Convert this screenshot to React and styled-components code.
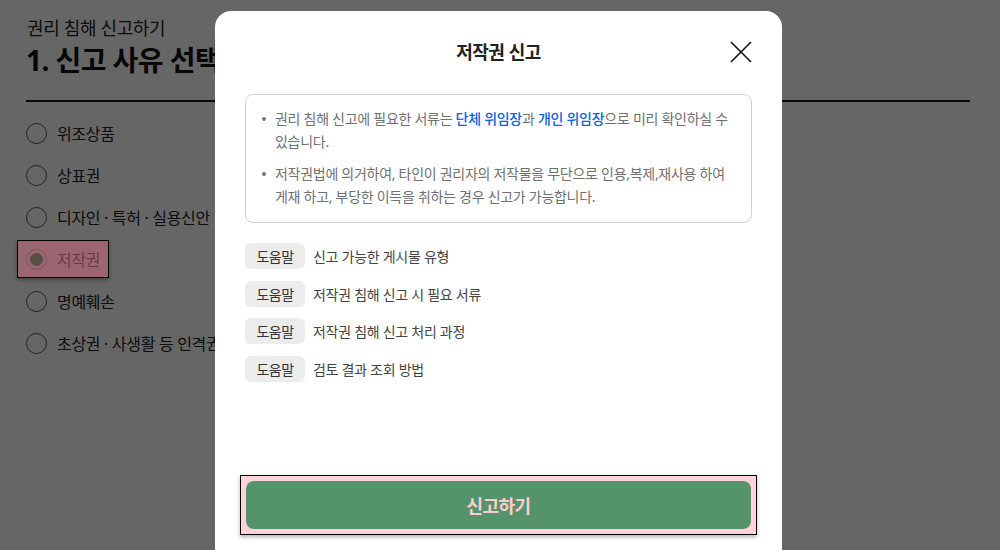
import React from 'react';
import styled, { createGlobalStyle } from 'styled-components';

const GlobalStyle = createGlobalStyle`
  * { box-sizing: border-box; }
  html, body { margin: 0; padding: 0; background: #ffffff; }
  body {
    font-family: "Noto Sans", "Noto Sans CJK KR", sans-serif;
    letter-spacing: -0.03em;
    color: #222;
  }
`;

const reasons = ['위조상품', '상표권', '디자인 · 특허 · 실용신안', '저작권', '명예훼손', '초상권 · 사생활 등 인격권'];

const helps = ['신고 가능한 게시물 유형', '저작권 침해 신고 시 필요 서류', '저작권 침해 신고 처리 과정', '검토 결과 조회 방법'];

const Page = styled.div`
  width: 1000px;
  height: 550px;
  padding: 14px 30px 0 26px;
  overflow: hidden;
`;

const SubTitle = styled.div`
  font-size: 18px;
  line-height: 28px;
  color: #222;
  padding-left: 1px;
  letter-spacing: -0.02em;
`;

const Title = styled.h1`
  margin: 0;
  font-size: 28px;
  line-height: 37px;
  font-weight: 700;
  color: #111;
  letter-spacing: -0.02em;
`;

const Divider = styled.div`
  height: 2px;
  background: #1c1c1c;
  margin-top: 21px;
`;

const ReasonList = styled.ul`
  list-style: none;
  margin: 0;
  padding: 12px 0 0;
  display: flex;
  flex-direction: column;
  gap: 4px;
`;

const Reason = styled.li`
  display: flex;
  align-items: center;
  gap: 10px;
  height: 38px;
  width: fit-content;
  margin-left: ${p => (p.$active ? '-9px' : '0')};
  padding: ${p => (p.$active ? '0 8px' : '0')};
  font-size: 16px;
  letter-spacing: -0.02em;
  color: ${p => (p.$active ? '#6a3846' : '#222')};
  background: ${p => (p.$active ? '#9b6672' : 'transparent')};
  border: ${p => (p.$active ? '1px solid #000' : 'none')};
  box-shadow: ${p => (p.$active ? '0 2px 4px rgba(0,0,0,0.35)' : 'none')};
  position: ${p => (p.$active ? 'relative' : 'static')};
  z-index: ${p => (p.$active ? 20 : 'auto')};
`;

const Radio = styled.span`
  width: 21px;
  height: 21px;
  border-radius: 50%;
  border: 1.5px solid ${p => (p.$active ? '#735c5c' : '#555')};
  display: flex;
  align-items: center;
  justify-content: center;
  flex-shrink: 0;

  &::after {
    content: '';
    display: ${p => (p.$active ? 'block' : 'none')};
    width: 13px;
    height: 13px;
    border-radius: 50%;
    background: #585040;
  }
`;

const Overlay = styled.div`
  position: fixed;
  inset: 0;
  background: rgba(0, 0, 0, 0.6);
  z-index: 10;
`;

const Modal = styled.div`
  position: fixed;
  left: 215px;
  top: 11px;
  width: 567px;
  height: 560px;
  background: #fff;
  border-radius: 16px;
  z-index: 30;
  padding: 12px 30px 36px;
  display: flex;
  flex-direction: column;
`;

const ModalHeader = styled.div`
  position: relative;
  height: 56px;
  display: flex;
  align-items: center;
  justify-content: center;
`;

const ModalTitle = styled.h2`
  margin: 0;
  font-size: 18px;
  font-weight: 700;
  color: #222;
`;

const CloseButton = styled.button`
  position: absolute;
  right: 0;
  top: 18px;
  width: 22px;
  height: 22px;
  padding: 0;
  border: none;
  background: none;
  cursor: pointer;
`;

const InfoBox = styled.ul`
  list-style: none;
  margin: 15px 0 0;
  padding: 12px 18px 14px 16px;
  border: 1px solid #d2d2d2;
  border-radius: 8px;
  display: flex;
  flex-direction: column;
  gap: 9px;
`;

const InfoItem = styled.li`
  position: relative;
  padding-left: 13px;
  font-size: 14px;
  line-height: 23px;
  color: #707070;
  letter-spacing: -0.02em;

  &::before {
    content: '';
    position: absolute;
    left: 0;
    top: 10px;
    width: 4px;
    height: 4px;
    border-radius: 50%;
    background: #777;
  }
`;

const Link = styled.a`
  color: #0a64dc;
  font-weight: 500;
  text-decoration: none;
`;

const HelpList = styled.div`
  margin-top: 20px;
  display: flex;
  flex-direction: column;
  gap: 11.5px;
`;

const HelpRow = styled.div`
  display: flex;
  align-items: center;
  gap: 8px;
`;

const Tag = styled.span`
  width: 60px;
  height: 26px;
  border-radius: 6px;
  background: #ececec;
  color: #333;
  font-size: 14px;
  display: flex;
  align-items: center;
  justify-content: center;
`;

const HelpText = styled.span`
  font-size: 14px;
  color: #444;
  letter-spacing: -0.02em;
`;

const SubmitFrame = styled.div`
  margin: auto -5px 0;
  padding: 5px;
  border: 1px solid #000;
  background: #ffd3d9;
  box-shadow: 0 2px 4px rgba(0, 0, 0, 0.3);
`;

const SubmitButton = styled.button`
  width: 100%;
  height: 48px;
  border: none;
  border-radius: 8px;
  background: #55936a;
  color: #ffccd3;
  font-family: inherit;
  letter-spacing: -0.03em;
  font-size: 18px;
  font-weight: 700;
  cursor: pointer;
`;

export default function App() {
  return (
    <>
      <GlobalStyle />
      <Page>
        <SubTitle>권리 침해 신고하기</SubTitle>
        <Title>1. 신고 사유 선택</Title>
        <Divider />
        <ReasonList>
          {reasons.map(r => {
            const active = r === '저작권';
            return (
              <Reason key={r} $active={active}>
                <Radio $active={active} />
                {r}
              </Reason>
            );
          })}
        </ReasonList>
      </Page>
      <Overlay />
      <Modal>
        <ModalHeader>
          <ModalTitle>저작권 신고</ModalTitle>
          <CloseButton aria-label="닫기">
            <svg width="22" height="22" viewBox="0 0 22 22">
              <path d="M1 1 L21 21 M21 1 L1 21" stroke="#111" strokeWidth="1.6" fill="none" />
            </svg>
          </CloseButton>
        </ModalHeader>
        <InfoBox>
          <InfoItem>
            권리 침해 신고에 필요한 서류는 <Link href="#">단체 위임장</Link>과 <Link href="#">개인 위임장</Link>으로 미리 확인하실 수 있습니다.
          </InfoItem>
          <InfoItem>
            저작권법에 의거하여, 타인이 권리자의 저작물을 무단으로 인용,복제,재사용 하여 게재 하고, 부당한 이득을 취하는 경우 신고가 가능합니다.
          </InfoItem>
        </InfoBox>
        <HelpList>
          {helps.map(h => (
            <HelpRow key={h}>
              <Tag>도움말</Tag>
              <HelpText>{h}</HelpText>
            </HelpRow>
          ))}
        </HelpList>
        <SubmitFrame>
          <SubmitButton type="button">신고하기</SubmitButton>
        </SubmitFrame>
      </Modal>
    </>
  );
}
